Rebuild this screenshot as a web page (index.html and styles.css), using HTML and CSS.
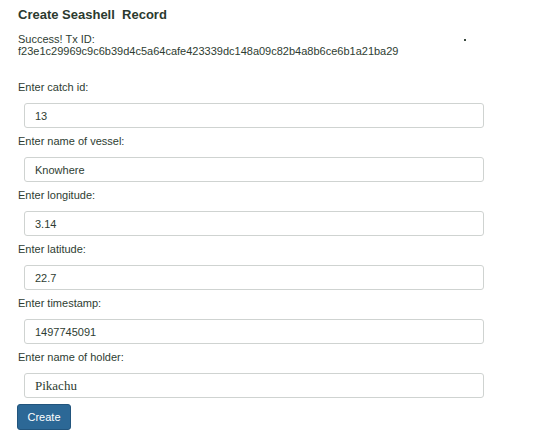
FILE: index.html
```html
<!DOCTYPE html>
<html>
<head>
<meta charset="utf-8">
<link rel="stylesheet" href="styles.css">
</head>
<body>
<div class="page">
  <h1 class="title">Create Seashell&nbsp; Record</h1>
  <p class="status">Success! Tx ID:<br>f23e1c29969c9c6b39d4c5a64cafe423339dc148a09c82b4a8b6ce6b1a21ba29</p>
  <span class="dot"></span>
  <form class="form">
    <div class="field">
      <label class="label">Enter catch id:</label>
      <input class="input" type="text" value="13">
    </div>
    <div class="field">
      <label class="label">Enter name of vessel:</label>
      <input class="input" type="text" value="Knowhere">
    </div>
    <div class="field">
      <label class="label">Enter longitude:</label>
      <input class="input" type="text" value="3.14">
    </div>
    <div class="field">
      <label class="label">Enter latitude:</label>
      <input class="input" type="text" value="22.7">
    </div>
    <div class="field">
      <label class="label">Enter timestamp:</label>
      <input class="input" type="text" value="1497745091">
    </div>
    <div class="field">
      <label class="label">Enter name of holder:</label>
      <input class="input input-serif" type="text" value="Pikachu">
    </div>
    <div class="actions">
      <button class="button" type="button">Create</button>
    </div>
  </form>
</div>
</body>
</html>
```

FILE: styles.css
```css
* { box-sizing: border-box; }
html, body { margin: 0; padding: 0; background: #fff; }
body {
  font-family: "Liberation Sans", Arial, sans-serif;
  color: #2e3d32;
}
.page {
  position: relative;
  padding: 7px 18px 0 18px;
}
.title {
  margin: 0;
  font-size: 13px;
  line-height: 16px;
  font-weight: bold;
  color: #2b3a2f;
}
.status {
  margin: 10px 0 0 0;
  font-size: 11px;
  line-height: 12px;
}
.dot {
  position: absolute;
  left: 464px;
  top: 39px;
  width: 2px;
  height: 2px;
  background: #3a4a40;
}
.form {
  margin-top: 23px;
  display: flex;
  flex-direction: column;
}
.field {
  display: flex;
  flex-direction: column;
  align-items: flex-start;
  margin-bottom: 6px;
}
.label {
  display: block;
  font-size: 11px;
  line-height: 14px;
  margin-bottom: 9px;
}
.input {
  margin: 0 0 0 6px;
  width: 460px;
  height: 25px;
  padding: 0 10px;
  border: 1px solid #cfd3d1;
  border-radius: 3px;
  font-family: "Liberation Sans", Arial, sans-serif;
  font-size: 11px;
  color: #2e3d32;
  background: #fff;
  outline: none;
}
.input-serif {
  font-family: "Liberation Serif", "Times New Roman", serif;
  font-size: 13px;
}
.actions {
  display: flex;
}
.button {
  margin-left: -1px;
  width: 54px;
  height: 26px;
  padding: 0;
  border: 1px solid #22557d;
  border-radius: 3px;
  background: #2c6896;
  color: #fff;
  font-family: "Liberation Sans", Arial, sans-serif;
  font-size: 11px;
}
```
